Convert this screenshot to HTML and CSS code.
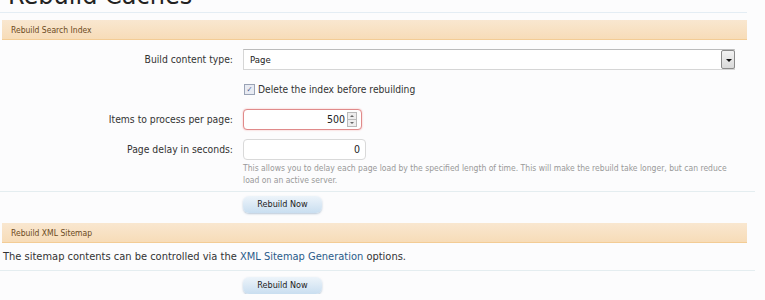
FILE: index.html
```html
<!DOCTYPE html>
<html lang="en">
<head>
    <meta charset="UTF-8">
    <title>Rebuild Caches</title>
    <link rel="stylesheet" href="styles.css">
</head>
<body>
    <div class="titleBar">
        <h1>Rebuild Caches</h1>
    </div>

    <form class="xenForm">
        <h3 class="sectionHeader">Rebuild Search Index</h3>

        <div class="ctrlUnit">
            <label class="ctrlLabel" for="ctype">Build content type:</label>
            <div class="ctrl">
                <div class="select" id="ctype">
                    <span>Page</span>
                    <span class="selectArrow"></span>
                </div>
            </div>
        </div>

        <div class="ctrlUnit check">
            <div class="ctrlLabel"></div>
            <div class="ctrl">
                <label class="checkLine"><span class="checkbox">&#10003;</span> Delete the index before rebuilding</label>
            </div>
        </div>

        <div class="ctrlUnit">
            <label class="ctrlLabel">Items to process per page:</label>
            <div class="ctrl">
                <div class="textCtrl number focused">500<span class="spinner"><i class="up"></i><i class="down"></i></span></div>
            </div>
        </div>

        <div class="ctrlUnit">
            <label class="ctrlLabel">Page delay in seconds:</label>
            <div class="ctrl">
                <div class="textCtrl number wide">0</div>
                <p class="explain">This allows you to delay each page load by the specified length of time. This will make the rebuild take longer, but can reduce load on an active server.</p>
            </div>
        </div>

        <div class="submitUnit">
            <div class="ctrlLabel"></div>
            <div class="ctrl"><span class="button">Rebuild Now</span></div>
        </div>

        <h3 class="sectionHeader">Rebuild XML Sitemap</h3>
        <p class="sitemapText">The sitemap contents can be controlled via the <a href="#">XML Sitemap Generation</a> options.</p>

        <div class="submitUnit">
            <div class="ctrlLabel"></div>
            <div class="ctrl"><span class="button">Rebuild Now</span></div>
        </div>
    </form>
</body>
</html>
```

FILE: styles.css
```css
body {
    margin: 0;
    background: #fcfcfd;
    font-family: "DejaVu Sans Condensed", "DejaVu Sans", sans-serif;
    font-size: 10px;
    color: #222;
    overflow: hidden;
}
.titleBar {
    height: 12px;
    border-bottom: 1px solid #e4edf4;
    margin-right: 18px;
    overflow: hidden;
    position: relative;
}
.titleBar h1 {
    margin: 0;
    position: absolute;
    left: 8px;
    bottom: 4px;
    font-size: 24px;
    font-weight: normal;
    line-height: 24px;
    color: #222;
    font-family: "DejaVu Sans", sans-serif;
}
.sectionHeader {
    margin: 7px 18px 0 2px;
    height: 19px;
    line-height: 20px;
    padding-left: 9px;
    font-size: 8.5px;
    font-weight: normal;
    color: #6b4a22;
    background: linear-gradient(#f9e7d0, #f7dcb8);
    border-bottom: 1px solid #f3cc95;
}
.ctrlUnit, .submitUnit {
    display: flex;
}
.ctrlLabel {
    width: 233px;
    flex: none;
    text-align: right;
    padding-right: 10px;
    font-size: 10.3px;
    color: #333;
}
.ctrl {
    flex: 1;
}
.ctrlUnit:nth-of-type(1) {
    margin-top: 9px;
}
.ctrlUnit .ctrlLabel {
    line-height: 20px;
}
.select {
    width: 492px;
    border: 1px solid #d6d6d6;
    border-top-color: #bbb;
    background: #fff;
    display: flex;
    justify-content: space-between;
    align-items: center;
    padding-left: 6px;
    font-size: 9.5px;
    box-sizing: border-box;
    height: 21px;
}
.selectArrow {
    width: 14px;
    height: 19px;
    background: linear-gradient(#f2f2f2, #d9d9d9);
    position: relative;
    border: 1px solid #8a8a8a;
    border-radius: 2px;
    box-sizing: border-box;
    margin-right: -1px;
}
.selectArrow::after {
    content: "";
    position: absolute;
    left: 4px;
    top: 8px;
    border: 3px solid transparent;
    border-top: 3px solid #111;
    border-bottom: 0;
}
.check {
    margin-top: 14px;
}
.checkLine {
    display: flex;
    align-items: center;
    font-size: 10.2px;
    color: #333;
}
.checkbox {
    width: 9px;
    height: 9px;
    border: 1px solid #9aa3b5;
    background: #e8ebf3;
    font-size: 8px;
    line-height: 9px;
    text-align: center;
    color: #4a5a8a;
    margin-left: 1px;
    margin-right: 3px;
}
.ctrlUnit.check + .ctrlUnit {
    margin-top: 14px;
}
.textCtrl {
    height: 21px;
    box-sizing: border-box;
    border: 1px solid #d9d9d9;
    border-radius: 4px;
    background: #fff;
    line-height: 19px;
    font-size: 10.5px;
    text-align: right;
}
.number {
    width: 119px;
    padding-right: 4px;
    display: flex;
    justify-content: flex-end;
    align-items: center;
}
.number.wide {
    width: 123px;
    padding-right: 5px;
}
.focused {
    border: 1px solid #e08a8a;
    box-shadow: 0 0 2px #f1b3b3;
    padding-right: 4px;
}
.spinner {
    width: 10px;
    height: 15px;
    margin-left: 2px;
    border: 1px solid #b9b9b9;
    background: #eee;
    box-sizing: border-box;
    display: flex;
    flex-direction: column;
}
.spinner i {
    flex: 1;
    position: relative;
}
.spinner .up {
    border-bottom: 1px solid #bbb;
}
.spinner .up::after, .spinner .down::after {
    content: "";
    position: absolute;
    left: 2px;
    top: 2px;
    border: 2px solid transparent;
}
.spinner .up::after {
    border-bottom: 2px solid #666;
    border-top: 0;
}
.spinner .down::after {
    border-top: 2px solid #666;
    border-bottom: 0;
}
.ctrlUnit:nth-of-type(4) {
    margin-top: 9px;
}
.explain {
    margin: 2px 0 0;
    font-size: 8.5px;
    line-height: 12px;
    color: #999;
    width: 500px;
}
.submitUnit {
    border-top: 1px solid #e4edf0;
    margin-top: 5px;
    padding-top: 4px;
    margin-right: 10px;
}
.button {
    display: inline-block;
    width: 79px;
    height: 17px;
    line-height: 17px;
    text-align: center;
    border-radius: 6px;
    background: linear-gradient(#edf4fa, #c9def0);
    box-shadow: 0 1px 2px rgba(120, 150, 180, 0.5);
    font-size: 9px;
    color: #222;
}
.sitemapText {
    margin: 0 10px 0 0;
    padding: 7px 3px 7px;
    font-size: 11px;
    color: #333;
}
.sitemapText a {
    color: #2a5b8a;
    text-decoration: none;
}
.sitemapText + .submitUnit {
    margin-top: 0;
    padding-top: 6px;
}
.submitUnit + .sectionHeader {
    margin-top: 10px;
}
```
